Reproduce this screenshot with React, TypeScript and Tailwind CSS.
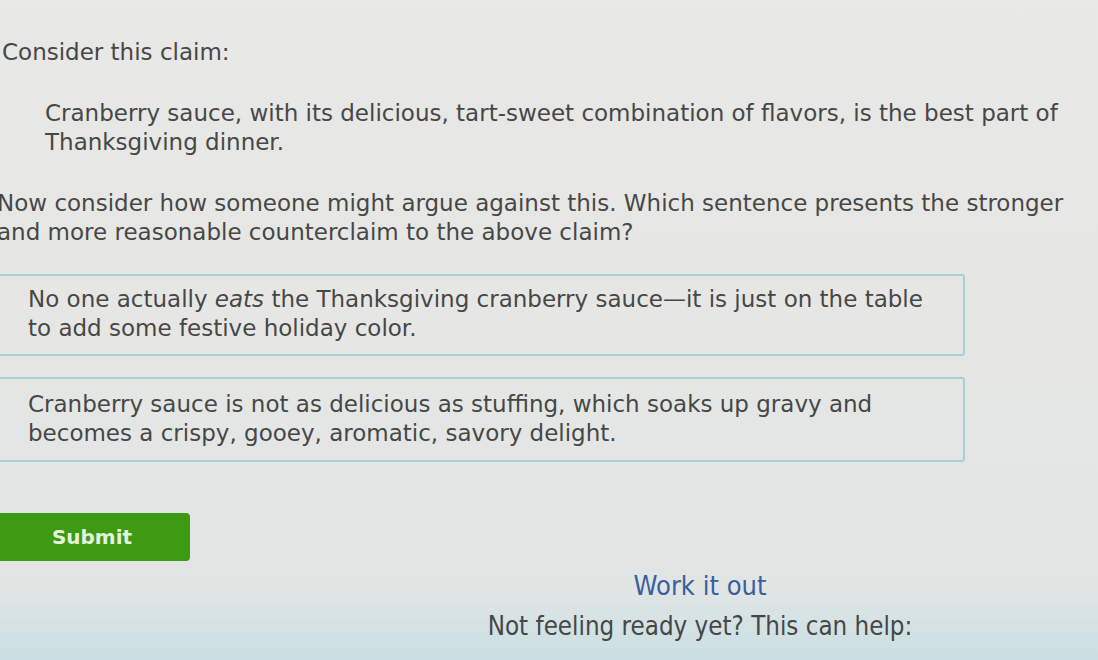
import React from "react";

const sans = { fontFamily: '"DejaVu Sans", Verdana, sans-serif' };
const cond = { fontFamily: '"Liberation Sans Narrow", "DejaVu Sans Condensed", "Roboto", sans-serif' };

export default function App() {
  return (
    <div className="relative w-[1098px] h-[660px] overflow-hidden bg-gradient-to-b from-[#e8e8e6] via-[#e6e7e5] to-[#dfe5e4] text-[#464746]" style={sans}>
      <div className="pointer-events-none absolute inset-x-0 bottom-0 h-[70px] bg-gradient-to-b from-transparent to-[#c9dfe3]" />
      <div className="relative flex flex-col ml-[-3px] pt-[38px] text-[23px] leading-[29px]">
        <p className="pl-[5px]">Consider this claim:</p>
        <p className="mt-[32px] pl-[48px]">
          Cranberry sauce, with its delicious, tart-sweet combination of flavors, is the best part of<br />Thanksgiving dinner.
        </p>
        <p className="mt-[32px] whitespace-nowrap">
          Now consider how someone might argue against this. Which sentence presents the stronger<br />and more reasonable counterclaim to the above claim?
        </p>
        <div className="mt-[27px] ml-[-17px] w-[985px] h-[82px] border-2 border-[#a9d0d6] rounded-[3px] pl-[46px] pt-[9px] whitespace-nowrap">
          No one actually <i>eats</i> the Thanksgiving cranberry sauce—it is just on the table<br />to add some festive holiday color.
        </div>
        <div className="mt-[21px] ml-[-17px] w-[985px] h-[85px] border-2 border-[#a9d0d6] rounded-[3px] pl-[46px] pt-[11px] whitespace-nowrap">
          Cranberry sauce is not as delicious as stuffing, which soaks up gravy and<br />becomes a crispy, gooey, aromatic, savory delight.
        </div>
        <div className="mt-[51px] ml-[-17px] w-[210px] h-[48px] bg-[#3e9a12] rounded-[4px] flex items-center justify-center pl-[14px]">
          <span className="text-[#e6f3dc] font-bold text-[20px]">Submit</span>
        </div>
      </div>
      <div className="relative flex flex-col items-center mt-[10px] ml-[302px]" style={cond}>
        <span className="text-[#3b5f9b] text-[27px] leading-[30px]">Work it out</span>
        <span className="mt-[10px] text-[#464746] text-[25.7px] leading-[30px]">Not feeling ready yet? This can help:</span>
      </div>
    </div>
  );
}
